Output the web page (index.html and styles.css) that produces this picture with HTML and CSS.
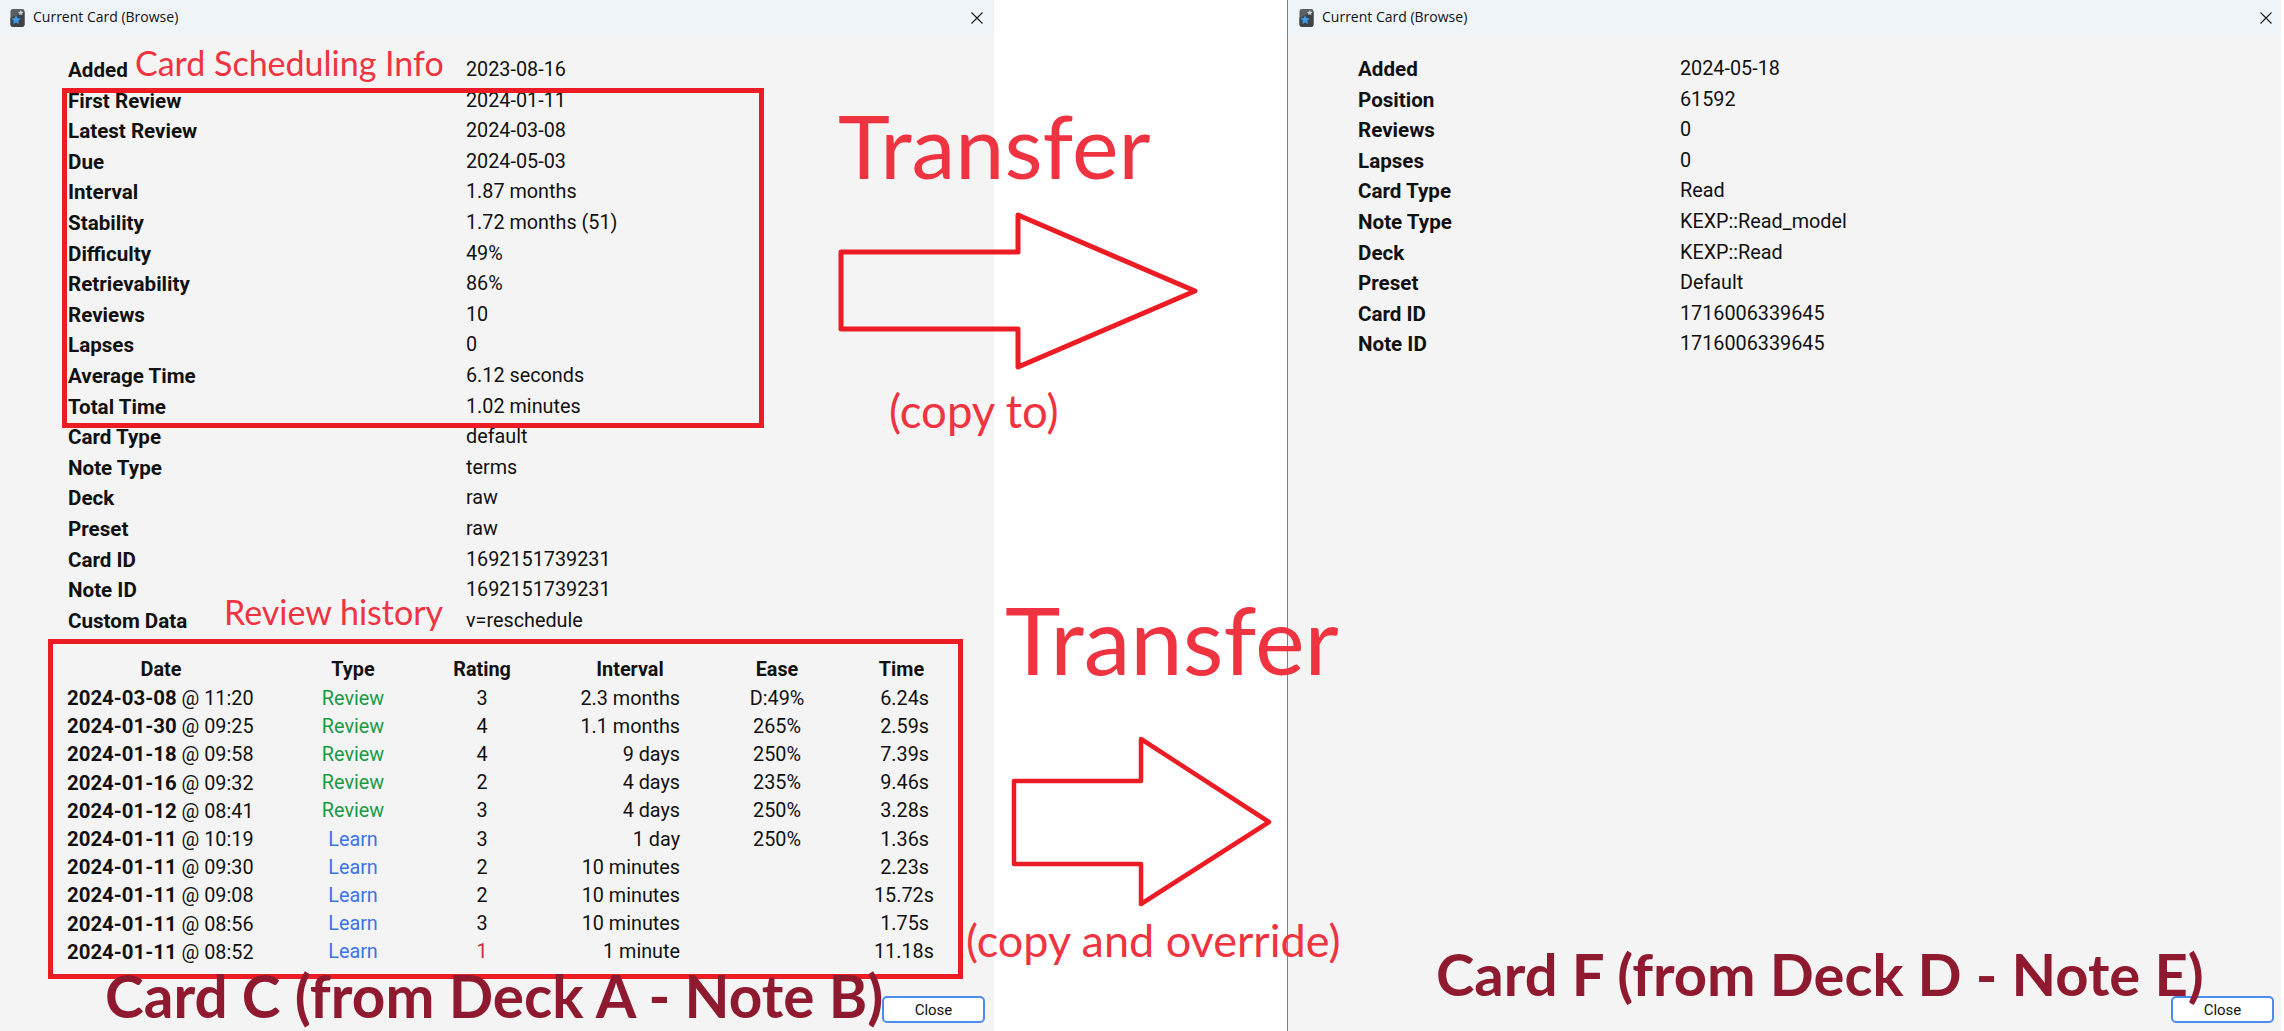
FILE: index.html
```html
<!DOCTYPE html>
<html lang="en">
<head>
  <meta charset="UTF-8">
  <title>Current Card (Browse) - Transfer</title>
  <link rel="stylesheet" href="styles.css">
</head>
<body>
  <div class="stage">
    <!-- Source card window -->
    <section class="window window-left">
      <header class="titlebar">
        <svg class="app-icon" viewBox="0 0 16 20"><rect x="0.5" y="0.5" width="15" height="19" rx="2.5" fill="#5b5f63"/><path d="M0.5 10 L15.5 3 V17 a2.500 2.500 0 0 1 -2.500 2.500 H3 a2.500 2.500 0 0 1 -2.500 -2.500Z" fill="#3f4347"/><path d="M11.500 1.500l.9 1.900 2 .3-1.500 1.400.4 2-1.800-1-1.800 1 .4-2-1.500-1.400 2-.3z" fill="#c9d3dc"/><path d="M6.500 7l1.500 3.100 3.400.5-2.500 2.400.6 3.400-3-1.600-3 1.600.6-3.400-2.500-2.400 3.400-.5z" fill="#3d9ae8"/></svg>
        <span class="title">Current Card (Browse)</span>
        <svg class="close-x" viewBox="0 0 12 12"><path d="M0.500 0.500L11.500 11.500M11.500 0.500L0.500 11.500" stroke="#1a1a1a" stroke-width="1.100" fill="none"/></svg>
      </header>
      <div class="stats stats-left">
        <b>Added</b><span>2023-08-16</span>
        <b>First Review</b><span>2024-01-11</span>
        <b>Latest Review</b><span>2024-03-08</span>
        <b>Due</b><span>2024-05-03</span>
        <b>Interval</b><span>1.87 months</span>
        <b>Stability</b><span>1.72 months (51)</span>
        <b>Difficulty</b><span>49%</span>
        <b>Retrievability</b><span>86%</span>
        <b>Reviews</b><span>10</span>
        <b>Lapses</b><span>0</span>
        <b>Average Time</b><span>6.12 seconds</span>
        <b>Total Time</b><span>1.02 minutes</span>
        <b>Card Type</b><span>default</span>
        <b>Note Type</b><span>terms</span>
        <b>Deck</b><span>raw</span>
        <b>Preset</b><span>raw</span>
        <b>Card ID</b><span>1692151739231</span>
        <b>Note ID</b><span>1692151739231</span>
        <b>Custom Data</b><span>v=reschedule</span>
      </div>
      <table class="revlog">
        <thead>
          <tr><th class="c-date">Date</th><th class="c-type">Type</th><th class="c-rating">Rating</th><th class="c-interval">Interval</th><th class="c-ease">Ease</th><th class="c-time">Time</th></tr>
        </thead>
        <tbody>
          <tr><td><b>2024-03-08</b> @ 11:20</td><td class="review">Review</td><td>3</td><td class="right">2.3 months</td><td>D:49%</td><td class="right">6.24s</td></tr>
          <tr><td><b>2024-01-30</b> @ 09:25</td><td class="review">Review</td><td>4</td><td class="right">1.1 months</td><td>265%</td><td class="right">2.59s</td></tr>
          <tr><td><b>2024-01-18</b> @ 09:58</td><td class="review">Review</td><td>4</td><td class="right">9 days</td><td>250%</td><td class="right">7.39s</td></tr>
          <tr><td><b>2024-01-16</b> @ 09:32</td><td class="review">Review</td><td>2</td><td class="right">4 days</td><td>235%</td><td class="right">9.46s</td></tr>
          <tr><td><b>2024-01-12</b> @ 08:41</td><td class="review">Review</td><td>3</td><td class="right">4 days</td><td>250%</td><td class="right">3.28s</td></tr>
          <tr><td><b>2024-01-11</b> @ 10:19</td><td class="learn">Learn</td><td>3</td><td class="right">1 day</td><td>250%</td><td class="right">1.36s</td></tr>
          <tr><td><b>2024-01-11</b> @ 09:30</td><td class="learn">Learn</td><td>2</td><td class="right">10 minutes</td><td></td><td class="right">2.23s</td></tr>
          <tr><td><b>2024-01-11</b> @ 09:08</td><td class="learn">Learn</td><td>2</td><td class="right">10 minutes</td><td></td><td class="right">15.72s</td></tr>
          <tr><td><b>2024-01-11</b> @ 08:56</td><td class="learn">Learn</td><td>3</td><td class="right">10 minutes</td><td></td><td class="right">1.75s</td></tr>
          <tr><td><b>2024-01-11</b> @ 08:52</td><td class="learn">Learn</td><td class="again">1</td><td class="right">1 minute</td><td></td><td class="right">11.18s</td></tr>
        </tbody>
      </table>
      <div class="footer"><button class="close-btn">Close</button></div>
    </section>

    <div class="gap"></div>

    <!-- Target card window -->
    <section class="window window-right">
      <header class="titlebar">
        <svg class="app-icon" viewBox="0 0 16 20"><rect x="0.5" y="0.5" width="15" height="19" rx="2.5" fill="#5b5f63"/><path d="M0.5 10 L15.5 3 V17 a2.500 2.500 0 0 1 -2.500 2.500 H3 a2.500 2.500 0 0 1 -2.500 -2.500Z" fill="#3f4347"/><path d="M11.500 1.500l.9 1.900 2 .3-1.500 1.400.4 2-1.800-1-1.800 1 .4-2-1.500-1.400 2-.3z" fill="#c9d3dc"/><path d="M6.500 7l1.500 3.100 3.400.5-2.500 2.400.6 3.400-3-1.600-3 1.600.6-3.400-2.500-2.400 3.400-.5z" fill="#3d9ae8"/></svg>
        <span class="title">Current Card (Browse)</span>
        <svg class="close-x" viewBox="0 0 12 12"><path d="M0.500 0.500L11.500 11.500M11.500 0.500L0.500 11.500" stroke="#1a1a1a" stroke-width="1.100" fill="none"/></svg>
      </header>
      <div class="stats stats-right">
        <b>Added</b><span>2024-05-18</span>
        <b>Position</b><span>61592</span>
        <b>Reviews</b><span>0</span>
        <b>Lapses</b><span>0</span>
        <b>Card Type</b><span>Read</span>
        <b>Note Type</b><span>KEXP::Read_model</span>
        <b>Deck</b><span>KEXP::Read</span>
        <b>Preset</b><span>Default</span>
        <b>Card ID</b><span>1716006339645</span>
        <b>Note ID</b><span>1716006339645</span>
      </div>
      <div class="footer"><button class="close-btn">Close</button></div>
    </section>

    <!-- Annotations drawn over the screenshots -->
    <div class="frame frame-info"></div>
    <div class="frame frame-log"></div>

    <svg class="arrows" viewBox="0 0 2284 1031">
      <path d="M841 252H1018V215L1195 291L1018 367V329H841Z"/>
      <path class="thin" d="M1014 781H1141V739L1269 822L1141 904V864H1014Z"/>
    </svg>

    <span class="note note-sched">Card Scheduling Info</span>
    <span class="note note-hist">Review history</span>
    <span class="note transfer-one">Transfer</span>
    <span class="note transfer-two">Transfer</span>
    <span class="note copy-to">(copy to)</span>
    <span class="note copy-over">(copy and override)</span>
    <span class="note caption caption-c">Card C (from Deck A - Note B)</span>
    <span class="note caption caption-f">Card F (from Deck D - Note E)</span>
  </div>
</body>
</html>
```
FILE: styles.css
```css
body {
  margin: 0;
  background: #fff;
  font-family: 'Roboto', 'Liberation Sans', sans-serif;
  color: #111;
}

.stage {
  position: relative;
  display: flex;
  width: 2284px;
  height: 1031px;
  overflow: hidden;
}

.window {
  position: relative;
  display: flex;
  flex-direction: column;
  height: 100%;
  background: #f4f4f4;
}

.window-left {
  width: 994px;
}

.gap {
  width: 293px;
}

.window-right {
  width: 993px;
  border-left: 1px solid #808080;
}

.titlebar {
  display: flex;
  align-items: center;
  height: 35px;
  padding: 0 10px;
  background: #eff4f9;
}

.window-right .titlebar {
  padding: 0 8px 0 11px;
}

.app-icon {
  width: 15px;
  height: 20px;
  margin-right: 8px;
}

.title {
  flex: 1;
  margin-top: -2px;
  font-family: 'Open Sans', sans-serif;
  font-size: 14px;
}

.close-x {
  width: 12px;
  height: 12px;
  margin-right: 1px;
}

.stats {
  display: grid;
  font-size: 19.800px;
  line-height: 30.600px;
}

.stats b {
  font-size: 20.600px;
  font-weight: 700;
}

.stats-left {
  grid-template-columns: 398px 1fr;
  padding: 20px 0 0 68px;
}

.stats-right {
  grid-template-columns: 322px 1fr;
  padding: 19px 0 0 70px;
}

.revlog {
  width: 878px;
  margin: 19.500px 0 0 59px;
  border-collapse: collapse;
  table-layout: fixed;
  font-size: 19.800px;
  text-align: center;
}

.revlog th,
.revlog td {
  box-sizing: border-box;
  height: 28.200px;
  padding: 0 8px;
  font-weight: 400;
  white-space: nowrap;
}

.revlog th {
  font-weight: 700;
}

.c-date { width: 204px; }
.c-type { width: 180px; }
.c-rating { width: 78px; }
.c-interval { width: 167px; }
.c-ease { width: 178px; }
.c-time { width: 71px; }

.revlog td:first-child {
  text-align: left;
}

.revlog .right {
  text-align: right;
}

/* header sits over the right part of the interval column */
.revlog th.c-interval {
  padding-left: 59px;
}

.revlog b {
  font-size: 20.400px;
  font-weight: 700;
}

.review { color: #1a9a45; }
.learn { color: #3b73e8; }
.revlog .again { color: #d8263a; }

.footer {
  display: flex;
  justify-content: flex-end;
  margin-top: auto;
  padding: 0 9px 8px 0;
}

.window-right .footer {
  padding-right: 7px;
}

.close-btn {
  width: 103px;
  height: 27px;
  padding: 0;
  background: #fff;
  border: 2px solid #4a8cf0;
  border-radius: 5px;
  font-family: 'Roboto', sans-serif;
  font-size: 15px;
  color: #111;
}

.frame {
  position: absolute;
  box-sizing: border-box;
  border: 5px solid #ed1c24;
}

.frame-info {
  left: 62px;
  top: 88px;
  width: 702px;
  height: 340px;
}

.frame-log {
  left: 48px;
  top: 639px;
  width: 915px;
  height: 340px;
}

.arrows {
  position: absolute;
  left: 0;
  top: 0;
  width: 2284px;
  height: 1031px;
}

.arrows path {
  fill: none;
  stroke: #ed1c24;
  stroke-width: 5;
  stroke-linejoin: round;
}

.arrows .thin {
  stroke-width: 4.500;
}

.note {
  position: absolute;
  font-family: 'Lato', sans-serif;
  color: #ef3340;
  white-space: nowrap;
  line-height: 1;
}

.note-sched {
  left: 135px;
  top: 46px;
  font-size: 34px;
}

.note-hist {
  left: 224px;
  top: 595px;
  font-size: 34px;
}

.transfer-one {
  left: 838px;
  top: 101px;
  font-size: 88px;
}

.transfer-two {
  left: 1005px;
  top: 592px;
  font-size: 94px;
}

.copy-to {
  left: 889px;
  top: 388px;
  font-size: 45.500px;
}

.copy-over {
  left: 966px;
  top: 918px;
  font-size: 45px;
}

.caption {
  font-weight: 700;
  font-size: 58.500px;
  color: #8f1a30;
}

.caption-c {
  left: 105px;
  top: 966px;
}

.caption-f {
  left: 1436px;
  top: 945px;
  font-size: 58px;
}
```
